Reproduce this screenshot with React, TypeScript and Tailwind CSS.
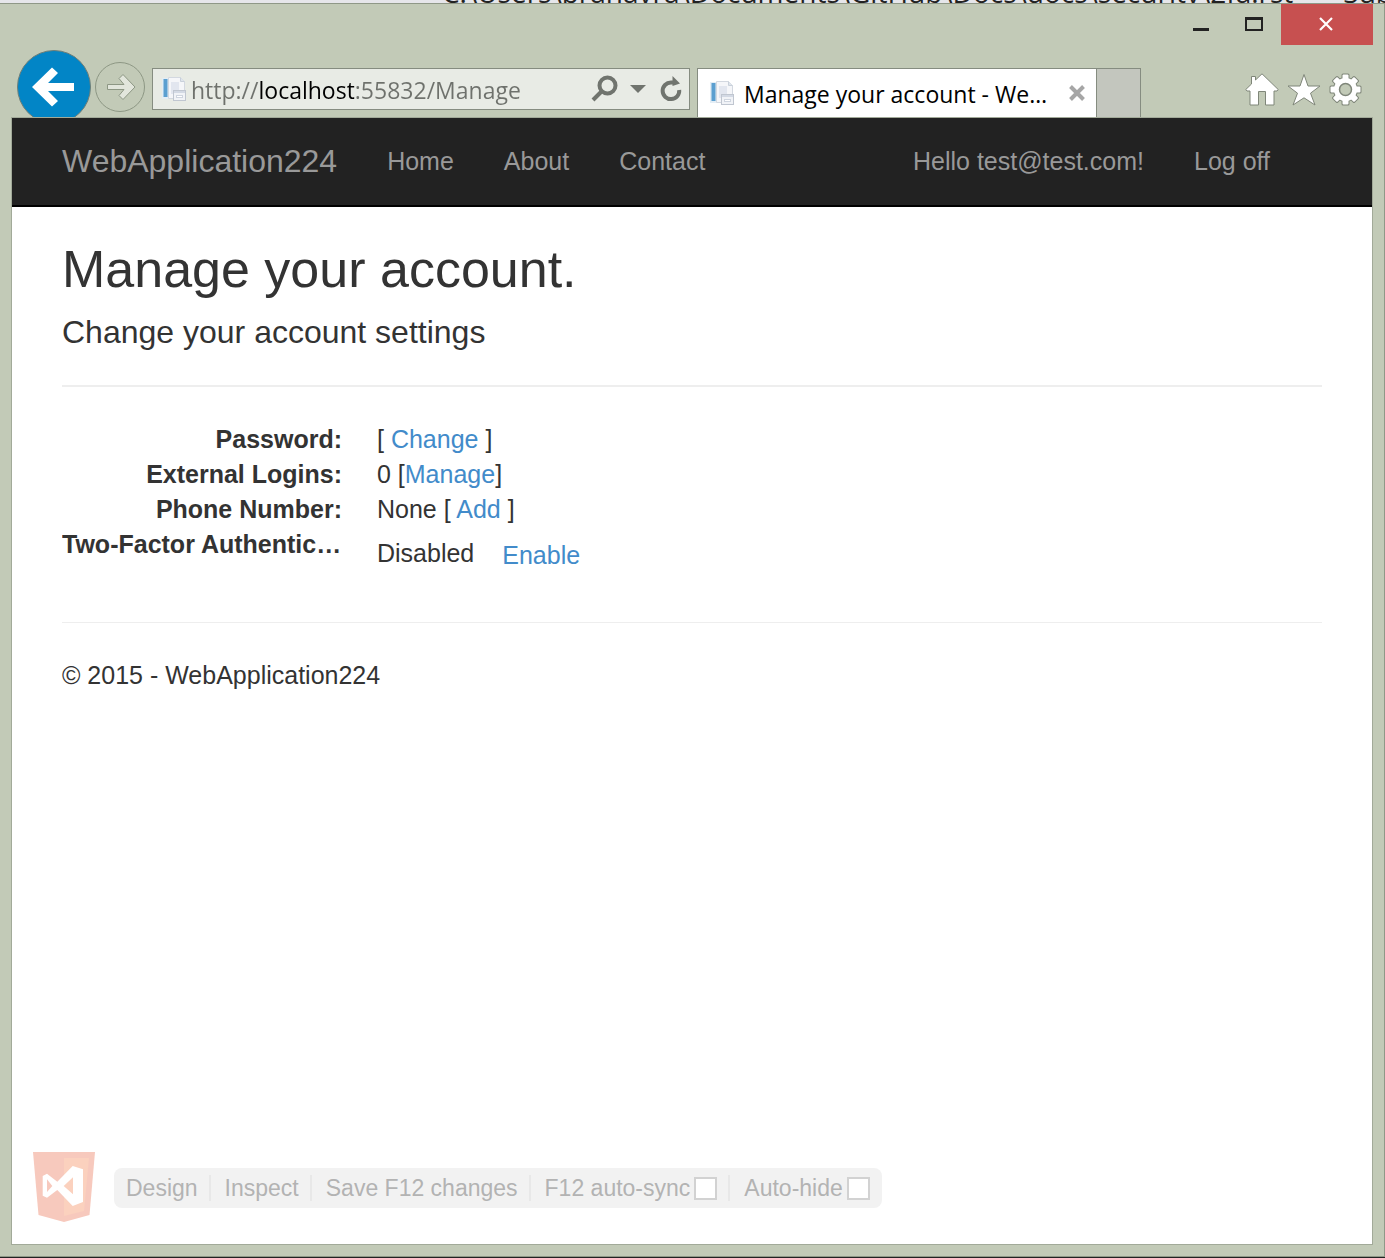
import React from "react";

function PageIcon() {
  return (
    <svg width="24" height="24" viewBox="0 0 24 24" className="shrink-0" aria-hidden="true">
      <rect x="0" y="1" width="8" height="21" fill="#e3edf5" />
      <rect x="1.500" y="2" width="4" height="18" fill="#5b9fd0" />
      <path d="M6.500.5h12l4 4V21.500H6.500z" fill="#f5f6f9" stroke="#d3d8e0" />
      <path d="M18.500 .5v4h4" fill="#dfe5ec" stroke="#c9d0da" />
      <rect x="9" y="5" width="8" height="12" fill="#e2e6ef" />
      <rect x="11.500" y="13.500" width="12" height="10" fill="#f1f3f7" stroke="#c0c6d0" />
      <path d="M12 15h11" stroke="#d3d9e4" strokeWidth="2" />
      <rect x="14.500" y="18.500" width="6" height="2" fill="#fff" stroke="#cfd5df" />
    </svg>
  );
}

const TEETH = [0, 45, 90, 135, 180, 225, 270, 315];

function GearIcon() {
  return (
    <svg width="33" height="33" viewBox="0 0 33 33" aria-hidden="true">
      <g fill="#7f8679">
        <circle cx="16.500" cy="16.500" r="12.500" />
        {TEETH.map((a) => (
          <rect key={a} x="12.500" y="0.500" width="8" height="8" rx="1.500" transform={`rotate(${a} 16.5 16.5)`} />
        ))}
      </g>
      <g fill="#fff">
        <circle cx="16.500" cy="16.500" r="11.500" />
        {TEETH.map((a) => (
          <rect key={a} x="13.500" y="1.500" width="6" height="8" rx="1" transform={`rotate(${a} 16.5 16.5)`} />
        ))}
      </g>
      <circle cx="16.500" cy="16.500" r="6" fill="#c2cab7" stroke="#7f8679" strokeWidth="1.500" />
    </svg>
  );
}

function WindowControls() {
  return (
    <div className="flex h-[41px] justify-end">
      <button aria-label="Minimize" className="flex w-[52px] items-center justify-center">
        <svg width="16" height="41" viewBox="0 0 16 41">
          <rect y="24" width="16" height="3" fill="#222" />
        </svg>
      </button>
      <button aria-label="Maximize" className="flex w-[54px] items-center justify-center">
        <svg width="18" height="41" viewBox="0 0 18 41">
          <path d="M0 13h18v14H0zM2 16v9h14v-9z" fill="#222" fillRule="evenodd" />
        </svg>
      </button>
      <button aria-label="Close" className="flex w-[92px] items-center justify-center bg-[#c75050] pr-[2px]">
        <svg width="14" height="41" viewBox="0 0 14 41">
          <path d="M1 14l12 12M13 14L1 26" stroke="#fff" strokeWidth="2.200" />
        </svg>
      </button>
    </div>
  );
}

function Toolbar() {
  return (
    <div className="flex h-[72px] items-end overflow-hidden font-['Open_Sans','Noto_Sans',sans-serif] text-[23px]">
      <div className="-mb-[7px] ml-[6px] mr-[7px] flex h-[74px] shrink-0 items-center gap-1">
        <button aria-label="Back">
          <svg width="74" height="74" viewBox="0 0 74 74">
            <circle cx="37" cy="37" r="36.500" fill="#0285c6" stroke="#6f7f78" />
            <path d="M35 17.500l6 5.500-10 10H57v8H31l10 10-6 5.500L15 37z" fill="#fff" />
          </svg>
        </button>
        <button aria-label="Forward">
          <svg width="50" height="50" viewBox="0 0 50 50">
            <circle cx="25" cy="25" r="24.500" fill="none" stroke="#8d9784" />
            <path
              d="M12.500 22.500H29l-5-6 4-4L40 25 28 37.500l-4-4 5-6H12.500z"
              fill="#e2e6dc"
              stroke="#8d9784"
            />
          </svg>
        </button>
      </div>
      <div className="mb-[7px] flex h-[42px] min-w-0 flex-1 items-center border border-[#858c80] bg-[#e8ebe5] pl-[9px] pr-[7px]">
        <PageIcon />
        <input
          aria-label="Address"
          defaultValue="http://localhost:55832/Manage"
          className="ml-[5px] h-9 min-w-0 flex-1 bg-[linear-gradient(to_right,#6e716c_67px,#000_67px,#000_163px,#6e716c_163px)] bg-clip-text pt-[2px] text-transparent outline-none"
        />
        <button aria-label="Search" className="mr-3">
          <svg width="27" height="28" viewBox="0 0 27 28">
            <circle cx="16.500" cy="10.500" r="8" fill="none" stroke="#70746e" strokeWidth="4" />
            <path d="M11 16L2 25" stroke="#70746e" strokeWidth="4" />
          </svg>
        </button>
        <button aria-label="Show address suggestions" className="mr-[14px]">
          <svg width="16" height="8" viewBox="0 0 16 8">
            <path d="M0 0h16L8 8z" fill="#70746e" />
          </svg>
        </button>
        <button aria-label="Refresh">
          <svg width="22" height="26" viewBox="0 0 22 26">
            <path d="M13 6.500H11A8.300 8.300 0 1 0 19.200 14" fill="none" stroke="#70746e" strokeWidth="4" />
            <path d="M12.500 0l7.500 7.500-7.500 2.500z" fill="#70746e" />
          </svg>
        </button>
      </div>
      <div className="ml-[7px] flex h-[49px] w-[400px] shrink-0 items-center border border-b-0 border-[#858c80] bg-white pl-3 pr-[11px] text-black">
        <PageIcon />
        <span className="ml-[10px] min-w-0 flex-1 truncate pt-[2px]">Manage your account - WebApplication224</span>
        <button aria-label="Close tab" className="ml-[16px]">
          <svg width="16" height="16" viewBox="0 0 16 16">
            <path d="M1.500 1.500l13 13M14.500 1.500l-13 13" stroke="#a6a6a6" strokeWidth="4" />
          </svg>
        </button>
      </div>
      <button
        aria-label="New tab"
        className="h-[49px] w-[44px] shrink-0 border border-b-0 border-l-0 border-[#858c80] bg-[#c3c6be]"
      />
      <div className="mb-[11px] ml-[104px] mr-[11px] flex shrink-0 items-center gap-[8px]">
        <button aria-label="Home">
          <svg width="34" height="33" viewBox="0 0 34 33">
            <path
              d="M17 .8L33.200 16.500 32 18h-3v14h-8.500V18.500h-7V32H5V18H2L.8 16.500 6.500 11V3.500h4v3.500z"
              fill="#fff"
              stroke="#7f8679"
            />
          </svg>
        </button>
        <button aria-label="Favorites">
          <svg width="34" height="33" viewBox="0 0 34 33">
            <path
              d="M17 1.500l4 11.500H33L23.500 20.200 28 32 17 24.800 6 32l4.500-11.800L1 13h12z"
              fill="#fff"
              stroke="#7f8679"
            />
          </svg>
        </button>
        <button aria-label="Tools">
          <GearIcon />
        </button>
      </div>
    </div>
  );
}

function SiteNav() {
  return (
    <nav className="flex h-[89px] shrink-0 items-center border-b-2 border-black bg-[#222] pl-[50px] pr-[102px] text-[#999]">
      <a href="#home" className="mr-[50px] text-[32px]">
        WebApplication224
      </a>
      <div className="flex gap-[50px]">
        <a href="#home">Home</a>
        <a href="#about">About</a>
        <a href="#contact">Contact</a>
      </div>
      <div className="ml-auto flex gap-[50px]">
        <a href="#manage">Hello test@test.com!</a>
        <a href="#logoff">Log off</a>
      </div>
    </nav>
  );
}

function Row({ label, children }: { label: string; children: React.ReactNode }) {
  return (
    <div className="flex gap-[35px]">
      <dt className="w-[280px] shrink-0 truncate text-right font-bold">{label}</dt>
      <dd>{children}</dd>
    </div>
  );
}

function AccountPage() {
  const link = "text-[#428bca]";
  return (
    <main className="px-[50px] pt-[33px]">
      <h2 className="text-[52px] leading-[58px]">Manage your account.</h2>
      <h4 className="mt-[17px] text-[32px] leading-[35px]">Change your account settings</h4>
      <hr className="mt-[35px] border-t-2 border-[#eee]" />
      <dl className="mt-[35px]">
        <Row label="Password:">
          [ <a href="#change" className={link}>Change</a> ]
        </Row>
        <Row label="External Logins:">
          0 [<a href="#logins" className={link}>Manage</a>]
        </Row>
        <Row label="Phone Number:">
          None [ <a href="#phone" className={link}>Add</a> ]
        </Row>
        <Row label="Two-Factor Authentication:">
          <form className="flex items-start gap-[28px] pt-[9px]">
            <span>Disabled</span>
            <button type="button" className="pt-[2px] text-[#428bca]">Enable</button>
          </form>
        </Row>
      </dl>
      <hr className="mt-[49px] border-[#eee]" />
      <footer className="mt-[35px]">© 2015 - WebApplication224</footer>
    </main>
  );
}

function BrowserLinkBar() {
  const box = "ml-1 size-[23px] appearance-none border-2 border-[#d2d2d2] bg-white";
  const divider = "ml-[11px] mr-[14px] h-[26px] w-[2px] bg-[#e8e8e8]";
  return (
    <div className="mt-auto flex items-center gap-[19px] pb-[22px] pl-[21px] pt-4 text-[23px] text-[#b3b3b3]">
      <svg width="62" height="70" viewBox="0 0 62 70" aria-hidden="true">
        <path d="M0 0h62l-5.500 63L31 70 5.500 63z" fill="#f7c9bd" />
        <path d="M31 6h25l-5 53-20 5z" fill="#fbd1be" />
        <path
          d="M9.700 24l4.300-2.300 10.300 8L39.700 14 50 17.300V50l-10.300 4L24.300 38 14 45.700 9.700 43.700zM40 25.300L30.700 34 40 42.300zM14 27.300V40l5.300-6z"
          fill="#fff"
          fillRule="evenodd"
        />
      </svg>
      <div className="mt-[2px] flex h-10 items-center rounded-[8px] bg-[#f2f2f2] px-3">
        <button>Design</button>
        <span className={divider} />
        <button>Inspect</button>
        <span className={divider} />
        <button>Save F12 changes</button>
        <span className={divider} />
        <label className="flex items-center">
          F12 auto-sync
          <input type="checkbox" className={box} />
        </label>
        <span className={divider} />
        <label className="flex items-center">
          Auto-hide
          <input type="checkbox" className={box} />
        </label>
      </div>
    </div>
  );
}

export default function App() {
  return (
    <div className="flex min-h-screen flex-col bg-[#222] font-['Liberation_Sans',Arial,sans-serif]">
      <div className="flex h-[3px] items-end justify-end gap-[50px] overflow-hidden whitespace-pre bg-[#e6e6ea] font-['Open_Sans',sans-serif] text-[28px] leading-[22px] text-[#222]">
        <span>C:\Users\pranavra\Documents\GitHub\Docs\docs\security\2fa.rst</span>
        <span className="-mr-2">Sub</span>
      </div>
      <div className="mb-px flex flex-1 flex-col border-y border-r border-[#8f9887] bg-[#c2cab7] px-[11px] pb-[11px]">
        <WindowControls />
        <Toolbar />
        <div className="flex flex-1 flex-col border border-[#a2aa99] bg-white text-[25px] leading-[35px] text-[#333]">
          <SiteNav />
          <AccountPage />
          <BrowserLinkBar />
        </div>
      </div>
    </div>
  );
}
